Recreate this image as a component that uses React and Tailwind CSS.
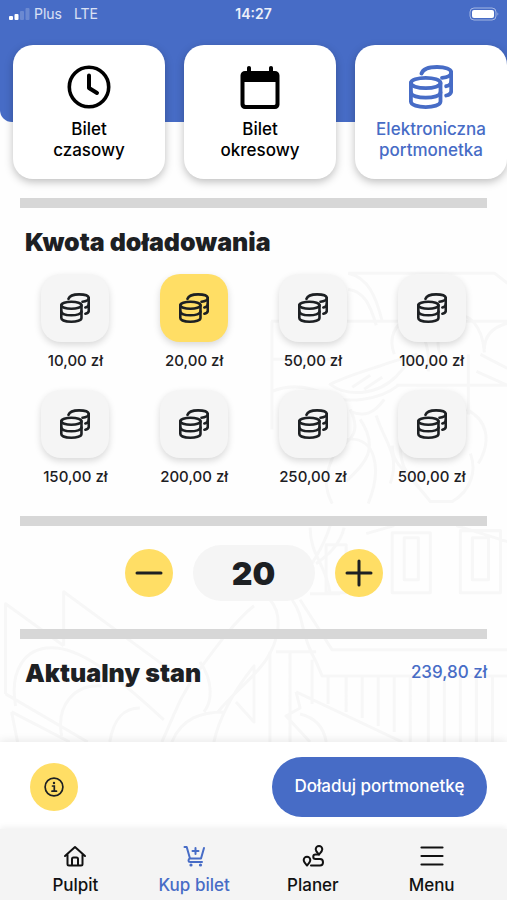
import { useState } from 'react';

const AMOUNTS = [10, 20, 50, 100, 150, 200, 250, 500];

function ClockIcon() {
  return (
    <svg viewBox="0 0 44 44" className="size-11" fill="none" stroke="currentColor" strokeWidth="4" strokeLinecap="round" strokeLinejoin="round" aria-hidden="true">
      <circle cx="22" cy="22" r="19.7" strokeWidth="3.6" />
      <path d="M22 10.5V23l8 5" />
    </svg>
  );
}

function CalendarIcon() {
  return (
    <svg viewBox="0 0 44 44" className="size-11" aria-hidden="true">
      <path
        fill="currentColor"
        fillRule="evenodd"
        d="M11 1c1.2 0 2 .8 2 2v3h18V3c0-1.2.8-2 2-2s2 .8 2 2v3h2a4.5 4.5 0 0 1 4.5 4.5v29A4.5 4.5 0 0 1 37 44H7a4.5 4.5 0 0 1-4.5-4.5v-29A4.5 4.5 0 0 1 7 6h2V3c0-1.2.8-2 2-2zM6.5 17v21.5A1.5 1.5 0 0 0 8 40h28a1.5 1.5 0 0 0 1.5-1.5V17z"
      />
    </svg>
  );
}

function CoinsIcon({ className }) {
  return (
    <svg viewBox="0 0 44 44" className={className} fill="none" stroke="currentColor" strokeWidth="3.8" strokeLinecap="round" strokeLinejoin="round" aria-hidden="true">
      <ellipse cx="16.7" cy="18" rx="14.8" ry="5.2" />
      <path d="M1.9 18v18.5c0 7.4 29.6 7.4 29.6 0V18" />
      <path d="M1.9 27.3c0 7.2 29.6 7.2 29.6 0" />
      <path d="M12.5 8.5C14 4.2 20 2 28 2c8.5 0 14.2 2.2 14.2 5.4V26c0 2.4-2 3.8-5 4.5" />
      <path d="M42.2 7.4c0 3.2-4.4 5-9.2 5.4M42.2 16.7c0 2.4-2 3.8-5 4.5" />
    </svg>
  );
}

function InfoIcon() {
  return (
    <svg viewBox="0 0 20 20" className="size-5" fill="none" stroke="currentColor" strokeWidth="1.7" strokeLinecap="round" aria-hidden="true">
      <circle cx="10" cy="10" r="8.9" />
      <path d="M8.5 9h1.8v5M8 14.2h4.500" />
      <circle cx="10" cy="6" r="1.2" fill="currentColor" stroke="none" />
    </svg>
  );
}

function HomeIcon() {
  return (
    <svg viewBox="0 0 24 24" className="size-6" fill="none" stroke="currentColor" strokeWidth="2" strokeLinecap="round" strokeLinejoin="round" aria-hidden="true">
      <path d="M2 12 12 3l10 9M4.5 10.5V20c0 1 .5 1.5 1.5 1.5h12c1 0 1.5-.5 1.5-1.5v-9.5" />
      <path d="M9 21v-6c0-1 .5-1.5 1.5-1.5h3c1 0 1.5.5 1.5 1.5v6" />
    </svg>
  );
}

function CartIcon() {
  return (
    <svg viewBox="0 0 24 24" className="size-6" fill="none" stroke="currentColor" strokeWidth="2" strokeLinecap="round" strokeLinejoin="round" aria-hidden="true">
      <path d="M2.5 3h2.2l3.3 11.5h11L22 4M8 14.5c-2 .5-2 3.5.3 3.5H20M13.500 4v6M10.500 7h6" />
      <circle cx="9" cy="21" r="1.6" fill="currentColor" stroke="none" />
      <circle cx="18.5" cy="21" r="1.6" fill="currentColor" stroke="none" />
    </svg>
  );
}

function RouteIcon() {
  return (
    <svg viewBox="0 0 24 24" className="size-6" fill="none" stroke="currentColor" strokeWidth="2" strokeLinecap="round" strokeLinejoin="round" aria-hidden="true">
      <path d="M6 21.5c-2-2.2-3.3-3.7-3.3-5.5a3.3 3.3 0 0 1 6.6 0c0 1.8-1.3 3.3-3.3 5.5z" />
      <path d="M18 10.5c-2-2.2-3.3-3.3-3.3-5.2a3.3 3.3 0 0 1 6.6 0c0 1.9-1.3 3-3.3 5.2z" />
      <path d="M18 10.5h-3.500c-3 0-3 4.5 0 4.5H19c4 0 4 6.5 0 6.5H10" />
    </svg>
  );
}

function MenuIcon() {
  return (
    <svg viewBox="0 0 24 24" className="size-6" fill="none" stroke="currentColor" strokeWidth="2.2" strokeLinecap="round" aria-hidden="true">
      <path d="M1.5 3.5h21M1.5 12h21M1.5 20.5h21" />
    </svg>
  );
}

// Pale line drawing of the town behind the form
function TownDrawing() {
  return (
    <svg
      viewBox="0 180 507 562"
      preserveAspectRatio="xMidYMax slice"
      className="absolute inset-0 -z-10 size-full"
      fill="none"
      stroke="#f7f7f7"
      strokeWidth="3"
      strokeLinejoin="round"
      aria-hidden="true"
    >
      <path d="M348 274h146l13 10M271 322h236M272 322v108M348 274c20 4 28 24 34 48M348 290c16 2 22 16 28 36M394 355c-6-16 0-30 14-36M408 322c14 6 22 24 20 50M440 355c-6-14 0-28 14-36s28 8 30 34M484 350c0-14 8-22 23-26M271 360h70M468 355v60" />
      <path d="M330 385c20-10 44-16 60-22l26-8-20 22c-20 20-50 20-66 8zM352 388l18-12M364 390l18-12M272 392c20-8 40-4 56 4s50 6 70-10M396 386h111M480 355l27 14M476 372l31 14" />
      <path d="M350 410c10 20 4 30-14 40-10 22-14 34-4 54M360 420c20 30 4 44-14 62M376 416c10 30 24 40 14 68M400 440c-2 34 14 40 30 62h22c20-12 24-32 18-48M346 440c30-4 36 30 22 64M384 400c-10 14-20 18-34 12M466 410c20 10 26 30 12 54M420 490c-10-18-28-22-28-44M310 528c0 28 16 36 20 66M330 526c-6 20-14 30-18 38M344 528c-4 16-14 26-28 36" />
      <path d="M392 593v-60h38v60zM404 580v-42h14v42zM460 593v-62h40v62zM472 580v-42h16v42zM326 593v-48h20v48zM366 534l28-8M456 526l51 16M310 594h30" />
      <path d="M6 694v-90l58 42M64 646v-54l98 72M16 706c-6-34 8-58 36-58s60 24 112 72M62 736c-6-32 14-52 40-50M6 694l82 48M12 712l58 30M12 712l6 30M254 606c-20 16-40 44-56 66-18 24-24 44-36 70M110 742c4-24 14-34 30-34M200 662c14 20 12 40 4 50M172 742c10-24 30-30 52-30M214 742c6-28 24-56 40-76v56l-18-20M270 600c14 16 8 42-4 60-12 18-34 34-48 52" />
      <path d="M300 600l32 50h175M292 600c14 20 6 30 24 62l6 14h185M276 652h40M270 652v90M290 652v90M312 660v44M328 676v28M346 676v36M362 676v42M378 676v50M394 676v56M410 676v66M428 676v66M444 676v66M460 676v66M476 676v66M492 676v66M296 692l106 50M296 692l4 16-14 8 24 26M300 714c16 4 24 14 26 28" />
    </svg>
  );
}

const TICKET_TABS = [
  { id: 'time', lines: ['Bilet', 'czasowy'], icon: <ClockIcon /> },
  { id: 'period', lines: ['Bilet', 'okresowy'], icon: <CalendarIcon /> },
  { id: 'wallet', lines: ['Elektroniczna', 'portmonetka'], icon: <CoinsIcon className="size-11" /> },
];

const NAV_ITEMS = [
  { label: 'Pulpit', icon: <HomeIcon /> },
  { label: 'Kup bilet', icon: <CartIcon />, active: true },
  { label: 'Planer', icon: <RouteIcon /> },
  { label: 'Menu', icon: <MenuIcon /> },
];

function StatusBar() {
  return (
    <div className="grid h-7 grid-cols-3 items-center px-2 text-sm text-white/80">
      <div className="flex items-center gap-1">
        <svg viewBox="0 0 22 14" className="h-[14px] w-[22px]" fill="white" aria-hidden="true">
          <rect x="1" y="9" width="4" height="4" rx="1" />
          <rect x="6.5" y="7" width="4" height="6" rx="1" />
          <rect x="12" y="4" width="4" height="9" rx="1" opacity=".2" />
          <rect x="17.5" y="1" width="4" height="12" rx="1" opacity=".2" />
        </svg>
        <span>Plus</span>
        <span className="ml-2">LTE</span>
      </div>
      <time className="text-center font-semibold text-white/90">14:27</time>
      <svg viewBox="0 0 30 14" className="h-[14px] w-[30px] justify-self-end" aria-hidden="true">
        <rect x="1" y="1" width="26" height="12" rx="4" fill="none" stroke="white" opacity=".5" />
        <rect x="3" y="3" width="22" height="8" rx="2" fill="white" />
        <path d="M28.5 5.5v3c1-.4 1-2.6 0-3z" fill="white" opacity=".5" />
      </svg>
    </div>
  );
}

function Divider() {
  return <hr className="mx-5 h-[10px] border-0 bg-[#d7d7d7]" />;
}

function SectionTitle({ children }) {
  return <h2 className="text-[25px] leading-7 font-black">{children}</h2>;
}

export default function App() {
  const [tab, setTab] = useState('wallet');
  const [amount, setAmount] = useState(20);

  return (
    <div className="flex min-h-screen flex-col bg-[#fefefe] font-['Inter','Noto_Sans',sans-serif] text-[#1d2023]">
      <header className="h-[122px] rounded-b-xl bg-[#476cc6]">
        <StatusBar />
      </header>

      {/* Ticket type */}
      <div role="tablist" className="z-10 -mt-[77px] flex gap-[19px] pl-[13px]">
        {TICKET_TABS.map((item) => (
          <button
            key={item.id}
            type="button"
            role="tab"
            aria-selected={tab === item.id}
            onClick={() => setTab(item.id)}
            className={`flex h-[134px] flex-1 flex-col items-center rounded-[20px] bg-white pt-5 text-[17px] leading-[21px] font-medium shadow-[0_3px_8px_rgba(0,0,0,0.25)] ${
              tab === item.id ? 'text-[#476cc6]' : 'text-black'
            }`}
          >
            {item.icon}
            <span className="mt-[10px]">
              {item.lines[0]}
              <br />
              {item.lines[1]}
            </span>
          </button>
        ))}
      </div>

      <main className="relative isolate flex-1 pt-[19px]">
        <TownDrawing />
        <Divider />

        {/* Top-up amounts */}
        <section>
          <div className="mt-5 px-[25px]">
            <SectionTitle>Kwota doładowania</SectionTitle>
          </div>
          <div className="mt-[18px] grid grid-cols-4 gap-y-[18px] px-4">
            {AMOUNTS.map((value) => (
              <button
                key={value}
                type="button"
                aria-pressed={amount === value}
                onClick={() => setAmount(value)}
                className="flex flex-col items-center gap-2 text-[15px] leading-[22px] font-medium"
              >
                <span
                  className={`flex size-[68px] items-center justify-center rounded-[20px] shadow-[0_3px_7px_rgba(0,0,0,0.15)] ${
                    amount === value ? 'bg-[#ffde65]' : 'bg-[#f5f5f5]'
                  }`}
                >
                  <CoinsIcon className="size-[30px]" />
                </span>
                {value},00 zł
              </button>
            ))}
          </div>
        </section>

        <div className="mt-7">
          <Divider />
        </div>

        <div className="my-[19px] flex items-center justify-center gap-5">
          <button
            type="button"
            aria-label="Zmniejsz kwotę"
            onClick={() => setAmount((v) => Math.max(0, v - 1))}
            className="flex size-12 items-center justify-center rounded-full bg-[#ffde65]"
          >
            <svg viewBox="0 0 28 28" className="size-7" stroke="currentColor" strokeWidth="3" strokeLinecap="round" aria-hidden="true">
              <path d="M2 14h24" />
            </svg>
          </button>
          <input
            type="text"
            inputMode="numeric"
            aria-label="Kwota doładowania"
            value={amount}
            onChange={(e) => setAmount(Number(e.target.value.replace(/\D/g, '')))}
            className="h-14 w-[122px] rounded-[28px] bg-[#f5f5f5] text-center text-[32px] leading-10 font-black"
          />
          <button
            type="button"
            aria-label="Zwiększ kwotę"
            onClick={() => setAmount((v) => v + 1)}
            className="flex size-12 items-center justify-center rounded-full bg-[#ffde65]"
          >
            <svg viewBox="0 0 28 28" className="size-7" stroke="currentColor" strokeWidth="3" strokeLinecap="round" aria-hidden="true">
              <path d="M2 14h24M14 2v24" />
            </svg>
          </button>
        </div>

        <div className="mt-7">
          <Divider />
        </div>

        {/* Current balance */}
        <section className="mt-5 flex items-center justify-between pr-5 pl-[25px]">
          <SectionTitle>Aktualny stan</SectionTitle>
          <span className="text-[17px] font-medium text-[#476cc6]">239,80 zł</span>
        </section>
      </main>

      <div className="z-10 flex items-center justify-between bg-white pt-[15px] pr-5 pb-3 pl-[30px] shadow-[0_-2px_8px_rgba(0,0,0,0.08)]">
        <button type="button" aria-label="Informacje" className="flex size-12 items-center justify-center rounded-full bg-[#ffde65]">
          <InfoIcon />
        </button>
        <button type="button" className="h-[60px] w-[215px] rounded-full bg-[#476cc6] text-[17px] font-medium text-white">
          Doładuj portmonetkę
        </button>
      </div>

      <nav className="z-20 grid h-[71px] grid-cols-4 bg-[#f4f4f4] px-4 pt-[15px] shadow-[0_-2px_6px_rgba(0,0,0,0.06)]">
        {NAV_ITEMS.map((item) => (
          <a
            key={item.label}
            href="#"
            aria-current={item.active ? 'page' : undefined}
            className={`flex flex-col items-center gap-[6px] text-[17px] leading-[22px] font-medium ${
              item.active ? 'text-[#476cc6]' : 'text-[#111111]'
            }`}
          >
            {item.icon}
            {item.label}
          </a>
        ))}
      </nav>
    </div>
  );
}
